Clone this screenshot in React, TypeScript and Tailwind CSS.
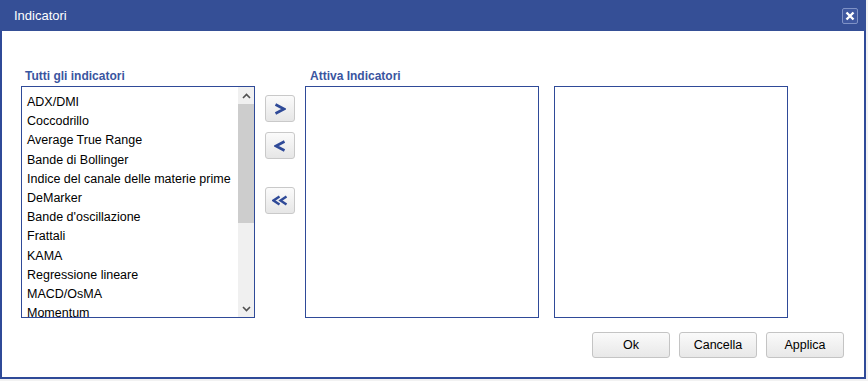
import { useState } from 'react';

const indicators = [
  'ADX/DMI',
  'Coccodrillo',
  'Average True Range',
  'Bande di Bollinger',
  'Indice del canale delle materie prime',
  'DeMarker',
  "Bande d'oscillazione",
  'Frattali',
  'KAMA',
  'Regressione lineare',
  'MACD/OsMA',
  'Momentum',
];

function MoveButton({ children, className = '' }: { children: React.ReactNode; className?: string }) {
  return (
    <button
      className={`w-[30px] h-[27px] rounded-[3px] border border-[#c9c9c9] bg-gradient-to-b from-[#fbfbfb] to-[#e6e6e6] flex items-center justify-center ${className}`}
    >
      {children}
    </button>
  );
}

function FooterButton({ label }: { label: string }) {
  return (
    <button className="w-[78px] h-[26px] rounded-[3px] border border-[#c4c4c4] bg-gradient-to-b from-[#fafafa] to-[#e8e8e8] text-[12.5px] text-black">
      {label}
    </button>
  );
}

function App() {
  const [selected] = useState<string | null>(null);

  return (
    <div className="w-[868px] h-[381px] bg-[#f2f2f2] font-['Liberation_Sans',Arial,sans-serif]">
      <div className="w-[866px] h-[379px] bg-white border-2 border-t-0 border-[#2f4a98] flex flex-col">
        {/* title bar */}
        <div className="h-[31px] -mx-[2px] bg-[#354f96] flex items-center justify-between pl-[14px] pr-[8px]">
          <span className="text-white text-[13px]">Indicatori</span>
          <div className="w-[16px] h-[16px] rounded-[2px] border border-[#7f92c6] bg-[#3f58a0] flex items-center justify-center">
            <svg width="10" height="10" viewBox="0 0 10 10">
              <path d="M1.5 1.5 L8.5 8.5 M8.5 1.5 L1.5 8.5" stroke="white" strokeWidth="2.4" />
            </svg>
          </div>
        </div>

        <div className="flex pl-[19px] pt-[36px]">
          {/* all indicators */}
          <div className="flex flex-col">
            <div className="text-[12px] font-bold text-[#3a55a0] pl-[4px] h-[19px]">Tutti gli indicatori</div>
            <div className="w-[234px] h-[232px] border border-[#2f4a98] flex overflow-hidden">
              <div className="flex-1 pl-[5px] pt-[6px] text-[12.5px] text-black">
                {indicators.map((name) => (
                  <div key={name} className={`h-[19.2px] leading-[19px] whitespace-nowrap ${selected === name ? 'bg-[#cfd9ef]' : ''}`}>
                    {name}
                  </div>
                ))}
              </div>
              <div className="w-[16px] bg-[#f0f0f0] flex flex-col">
                <div className="h-[17px] flex items-center justify-center">
                  <svg width="9" height="6" viewBox="0 0 9 6">
                    <path d="M1 5 L4.5 1.5 L8 5" fill="none" stroke="#505050" strokeWidth="1.6" />
                  </svg>
                </div>
                <div className="h-[119px] bg-[#cdcdcd]" />
                <div className="flex-1" />
                <div className="h-[17px] flex items-center justify-center">
                  <svg width="9" height="6" viewBox="0 0 9 6">
                    <path d="M1 1 L4.5 4.5 L8 1" fill="none" stroke="#505050" strokeWidth="1.6" />
                  </svg>
                </div>
              </div>
            </div>
          </div>

          {/* move buttons */}
          <div className="flex flex-col pt-[28px] ml-[10px] w-[30px]">
            <MoveButton>
              <svg width="12" height="12" viewBox="0 0 12 12">
                <path d="M1.5 1.5 L10 6 L1.5 10.5" fill="none" stroke="#2f4a98" strokeWidth="2.6" strokeLinejoin="miter" />
              </svg>
            </MoveButton>
            <MoveButton className="mt-[10px]">
              <svg width="12" height="12" viewBox="0 0 12 12">
                <path d="M10.5 1.5 L2 6 L10.5 10.5" fill="none" stroke="#2f4a98" strokeWidth="2.6" strokeLinejoin="miter" />
              </svg>
            </MoveButton>
            <MoveButton className="mt-[28px]">
              <svg width="16" height="11" viewBox="0 0 16 11">
                <path d="M7.5 1.5 L1.5 5.5 L7.5 9.5 M14.5 1.5 L8.5 5.5 L14.5 9.5" fill="none" stroke="#2f4a98" strokeWidth="2.4" strokeLinejoin="miter" />
              </svg>
            </MoveButton>
          </div>

          {/* active */}
          <div className="flex flex-col ml-[10px]">
            <div className="text-[12px] font-bold text-[#3a55a0] pl-[5px] h-[19px]">Attiva Indicatori</div>
            <div className="flex gap-[15px]">
              <div className="w-[234px] h-[232px] border border-[#2f4a98]" />
              <div className="w-[234px] h-[232px] border border-[#2f4a98]" />
            </div>
          </div>
        </div>

        {/* footer */}
        <div className="flex justify-end gap-[9px] pr-[20px] mt-[14px]">
          <FooterButton label="Ok" />
          <FooterButton label="Cancella" />
          <FooterButton label="Applica" />
        </div>
      </div>
    </div>
  );
}

export default App;
